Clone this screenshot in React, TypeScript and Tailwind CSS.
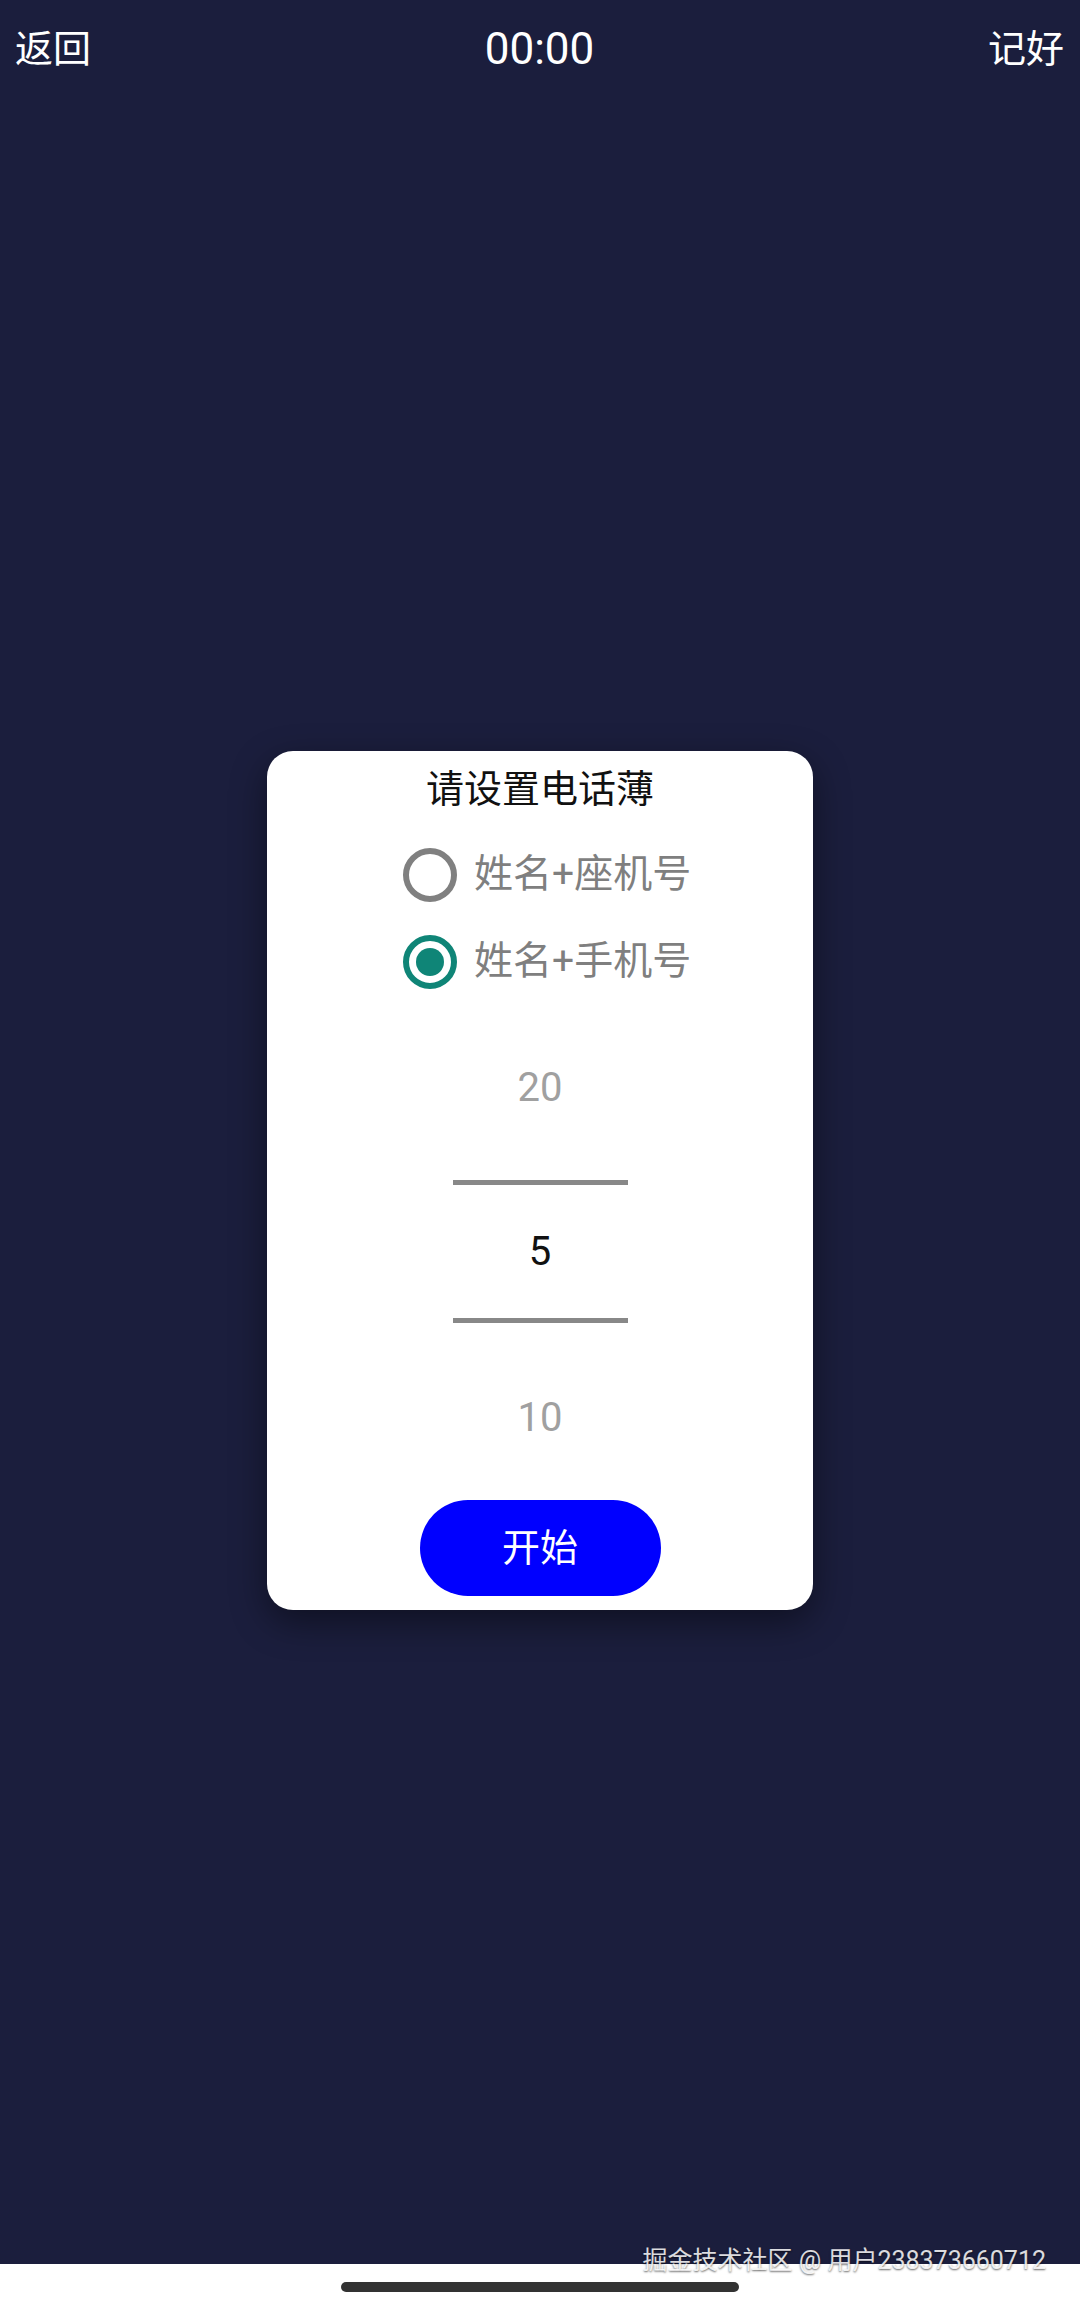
import React, { useState } from "react";

const font = "font-['Roboto','Noto_Sans_CJK_SC',sans-serif]";

const Radio: React.FC<{ checked: boolean; label: string; onClick: () => void }> = ({
  checked,
  label,
  onClick,
}) => (
  <button onClick={onClick} className="h-[87px] flex items-center gap-[17px] self-start ml-[136px]">
    <span
      className={`w-[54px] h-[54px] rounded-full border-[6px] flex items-center justify-center ${
        checked ? "border-[#0f8577]" : "border-[#808080]"
      }`}
    >
      {checked && <span className="w-[28px] h-[28px] rounded-full bg-[#0f8577]" />}
    </span>
    <span className="text-[39px] leading-none text-[#7f7f7f]">{label}</span>
  </button>
);

const App: React.FC = () => {
  const [mode, setMode] = useState("mobile");

  return (
    <div className={`relative w-full min-h-[2309px] flex flex-col bg-[#1b1e3d] ${font}`}>
      {/* Top bar */}
      <div className="h-[98px] flex items-center justify-between pl-[15px] pr-[16px] text-white">
        <span className="text-[38px] leading-none">返回</span>
        <span className="text-[44px] leading-none">00:00</span>
        <span className="text-[38px] leading-none">记好</span>
      </div>

      {/* Dialog */}
      <div className="mt-[653px] mx-auto w-[546px] rounded-[26px] bg-white flex flex-col items-center shadow-[0_12px_36px_rgba(0,0,0,0.45)]">
        <h1 className="pt-[17px] text-[38px] leading-[43px] text-[#111]">请设置电话薄</h1>

        <div className="mt-[20px] w-full flex flex-col">
          <Radio checked={mode === "landline"} label="姓名+座机号" onClick={() => setMode("landline")} />
          <Radio checked={mode === "mobile"} label="姓名+手机号" onClick={() => setMode("mobile")} />
        </div>

        {/* Number picker */}
        <div className="w-[175px] flex flex-col text-[40px] leading-none">
          <div className="h-[165px] flex items-center justify-center text-[#a0a0a0]">20</div>
          <div className="h-[165px] flex flex-col">
            <div className="mt-[10px] h-[5px] bg-[#888]" />
            <div className="flex-1 flex items-center justify-center text-[#111]">5</div>
            <div className="mb-[12px] h-[5px] bg-[#888]" />
          </div>
          <div className="h-[165px] flex items-center justify-center text-[#a0a0a0]">10</div>
        </div>

        <button className="mb-[14px] w-[241px] h-[96px] rounded-full bg-[#0000ff] text-white text-[38px] leading-none">
          开始
        </button>
      </div>

      <div className="flex-1" />

      {/* Bottom system bar */}
      <div className="h-[45px] bg-white flex justify-center pt-[18px]">
        <div className="w-[398px] h-[10px] rounded-full bg-[#333]" />
      </div>

      <div className="absolute right-[34px] top-[2248px] text-[25px] leading-none text-white/85 [text-shadow:0_1px_2px_rgba(0,0,0,0.6)]">
        掘金技术社区 @ 用户238373660712
      </div>
    </div>
  );
};

export default App;
